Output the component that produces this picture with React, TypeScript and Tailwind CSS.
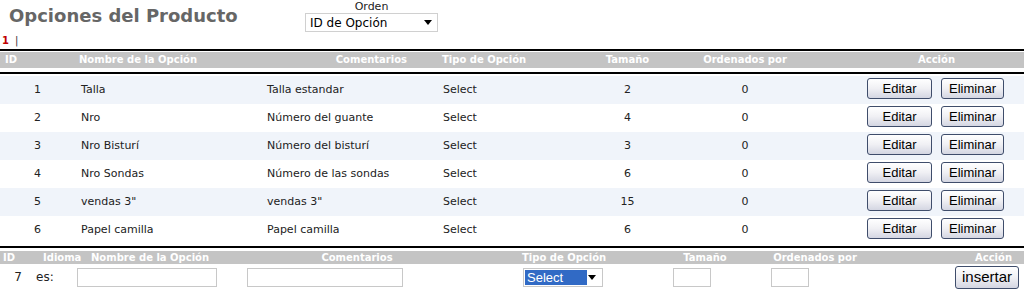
import React from "react";

const rows = [
  { id: 1, name: "Talla", com: "Talla estandar", tam: 2 },
  { id: 2, name: "Nro", com: "Número del guante", tam: 4 },
  { id: 3, name: "Nro Bisturí", com: "Número del bisturí", tam: 3 },
  { id: 4, name: "Nro Sondas", com: "Número de las sondas", tam: 6 },
  { id: 5, name: 'vendas 3"', com: 'vendas 3"', tam: 15 },
  { id: 6, name: "Papel camilla", com: "Papel camilla", tam: 6 },
];

const Arrow = () => (
  <svg width="8" height="5" viewBox="0 0 8 5" className="block">
    <path d="M0 0 H8 L4 5 Z" fill="#000" />
  </svg>
);

const Btn = ({ children, w }: { children: React.ReactNode; w: string }) => (
  <div
    className={`${w} h-[21px] flex items-center justify-center rounded-[3px] border border-[#3f4d6b] bg-gradient-to-b from-[#ffffff] via-[#f0f0f4] to-[#d4d6e2] text-[13px] text-black font-['Liberation_Sans',Arial,sans-serif]`}
  >
    {children}
  </div>
);

export default function App() {
  return (
    <div className="w-[1024px] h-[293px] bg-white overflow-hidden font-['DejaVu_Sans',Verdana,sans-serif] text-[#222]">
      {/* top */}
      <div className="flex h-[32px]">
        <div className="w-[305px] pl-[9px] pt-[3px] text-[18px] font-bold text-[#666] leading-[26px]">
          Opciones del Producto
        </div>
        <div className="w-[133px] flex flex-col items-center">
          <div className="text-[11px] leading-[13px] text-[#222]">Orden</div>
          <div className="w-[133px] h-[19px] border border-[#d0d0d0] flex items-center justify-between pl-[4px] pr-[5px] text-[12px] text-black">
            <span>ID de Opción</span>
            <Arrow />
          </div>
        </div>
      </div>
      <div className="h-[17px] flex items-center pl-[2px] text-[10px] leading-none">
        <span className="font-bold text-[#c00000]">1</span>
        <span className="ml-[6px] text-[#333]">|</span>
      </div>
      <div className="h-[2px] bg-black" />
      <div className="h-[1px]" />
      <div className="h-[16px] bg-[#c4c4c4] flex items-center text-white font-bold text-[10px] leading-none">
        <div className="w-[75px] pl-[5px]">ID</div>
        <div className="w-[185px] pl-[4px]">Nombre de la Opción</div>
        <div className="w-[177px] text-right pr-[30px]">Comentarios</div>
        <div className="w-[128px] pl-[5px]">Tipo de Opción</div>
        <div className="w-[125px] text-center">Tamaño</div>
        <div className="w-[110px] text-center">Ordenados por</div>
        <div className="w-[224px] pl-[118px]">Acción</div>
      </div>
      <div className="h-[4px]" />
      <div className="h-[2px] bg-black" />
      <div className="h-[2px]" />
      {rows.map((r, i) => (
        <div
          key={r.id}
          className={`h-[28px] flex items-center text-[11px] ${i % 2 === 0 ? "bg-[#f0f4fa]" : "bg-white"}`}
        >
          <div className="w-[75px] text-center">{r.id}</div>
          <div className="w-[185px] pl-[6px]">{r.name}</div>
          <div className="w-[177px] pl-[7px]">{r.com}</div>
          <div className="w-[128px] pl-[6px]">Select</div>
          <div className="w-[125px] text-center">{r.tam}</div>
          <div className="w-[110px] text-center">0</div>
          <div className="w-[224px] pl-[67px] flex gap-[9px] -mt-[3px]">
            <Btn w="w-[65px]">Editar</Btn>
            <Btn w="w-[63px]">Eliminar</Btn>
          </div>
        </div>
      ))}
      <div className="h-[2px]" />
      <div className="h-[2px] bg-black" />
      <div className="h-[3px]" />
      <div className="h-[13px] bg-[#c4c4c4] flex items-center text-white font-bold text-[10px] leading-none">
        <div className="w-[40px] pl-[3px]">ID</div>
        <div className="w-[48px] pl-[3px]">Idioma</div>
        <div className="w-[182px] pl-[3px]">Nombre de la Opción</div>
        <div className="w-[174px] text-center">Comentarios</div>
        <div className="w-[206px] pl-[78px]">Tipo de Opción</div>
        <div className="w-[110px] text-center">Tamaño</div>
        <div className="w-[110px] text-center">Ordenados por</div>
        <div className="w-[154px] text-right pr-[12px]">Acción</div>
      </div>
      <div className="h-[26px] flex items-center text-[12px]">
        <div className="w-[36px] text-right pr-[14px]">7</div>
        <div className="w-[41px]">es:</div>
        <div className="w-[140px] h-[19px] border border-[#c8c8c8] bg-white" />
        <div className="w-[30px]" />
        <div className="w-[156px] h-[19px] border border-[#c8c8c8] bg-white" />
        <div className="w-[120px]" />
        <div className="w-[80px] h-[19px] border border-[#c8c8c8] bg-white flex items-center pl-[1px] pr-[6px] justify-between">
          <div className="w-[62px] h-[15px] bg-[#316ac5] text-white text-[13px] leading-[15px] pl-[2px] font-['Liberation_Sans',Arial,sans-serif]">
            Select
          </div>
          <Arrow />
        </div>
        <div className="w-[70px]" />
        <div className="w-[38px] h-[19px] border border-[#c8c8c8] bg-white" />
        <div className="w-[60px]" />
        <div className="w-[38px] h-[19px] border border-[#c8c8c8] bg-white" />
        <div className="w-[146px]" />
        <div className="w-[64px] h-[23px] flex items-center justify-center rounded-[3px] border border-[#3f4d6b] bg-gradient-to-b from-[#ffffff] via-[#f0f0f4] to-[#d4d6e2] text-[15px] text-black font-['Liberation_Sans',Arial,sans-serif]">
          insertar
        </div>
      </div>
    </div>
  );
}
